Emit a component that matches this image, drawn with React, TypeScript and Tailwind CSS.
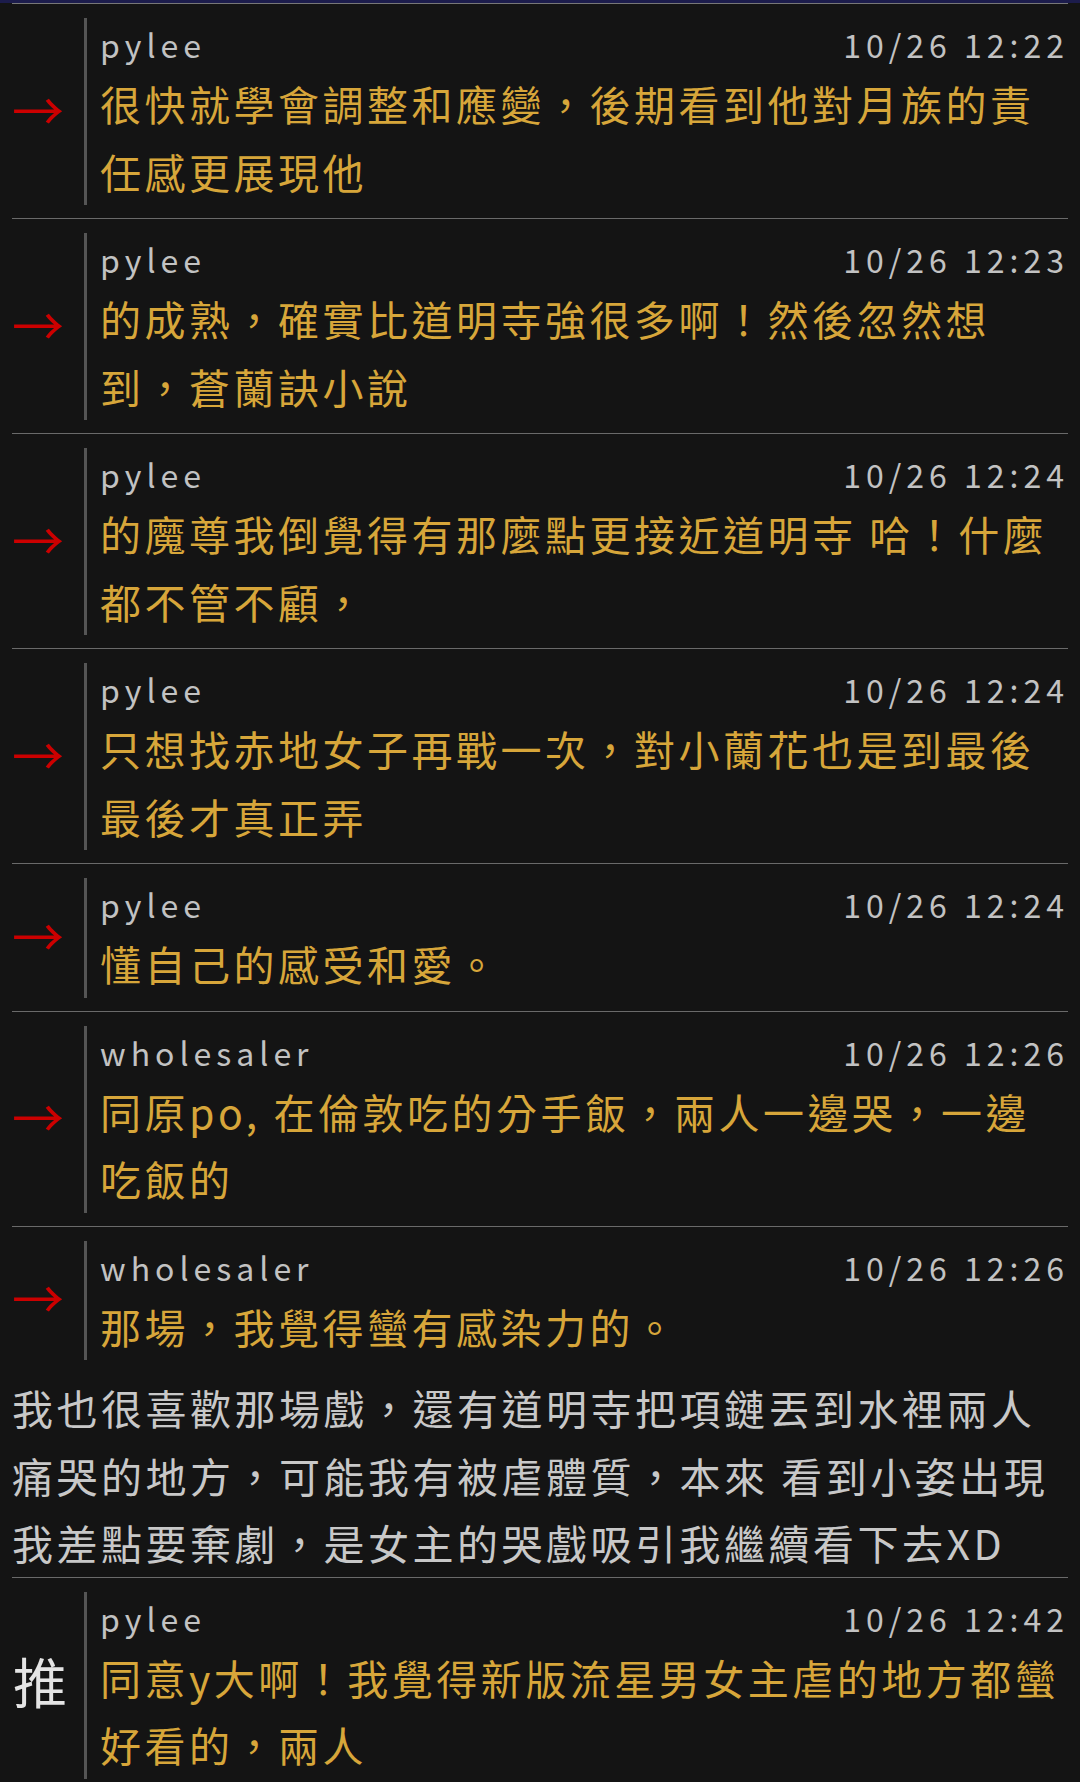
import React from "react";

interface Comment {
  tag: "arrow" | "push";
  user: string;
  time: string;
  lines: string[];
  last?: boolean;
}

const COMMENTS: Comment[] = [
  { tag: "arrow", user: "pylee", time: "10/26 12:22", lines: ["很快就學會調整和應變，後期看到他對月族的責", "任感更展現他"] },
  { tag: "arrow", user: "pylee", time: "10/26 12:23", lines: ["的成熟，確實比道明寺強很多啊！然後忽然想", "到，蒼蘭訣小說"] },
  { tag: "arrow", user: "pylee", time: "10/26 12:24", lines: ["的魔尊我倒覺得有那麼點更接近道明寺 哈！什麼", "都不管不顧，"] },
  { tag: "arrow", user: "pylee", time: "10/26 12:24", lines: ["只想找赤地女子再戰一次，對小蘭花也是到最後", "最後才真正弄"] },
  { tag: "arrow", user: "pylee", time: "10/26 12:24", lines: ["懂自己的感受和愛。"] },
  { tag: "arrow", user: "wholesaler", time: "10/26 12:26", lines: ["同原po, 在倫敦吃的分手飯，兩人一邊哭，一邊", "吃飯的"] },
  { tag: "arrow", user: "wholesaler", time: "10/26 12:26", lines: ["那場，我覺得蠻有感染力的。"], last: true },
];

const BODY = [
  "我也很喜歡那場戲，還有道明寺把項鏈丟到水裡兩人",
  "痛哭的地方，可能我有被虐體質，本來 看到小姿出現",
  "我差點要棄劇，是女主的哭戲吸引我繼續看下去XD",
];

const PUSH: Comment = {
  tag: "push",
  user: "pylee",
  time: "10/26 12:42",
  lines: ["同意y大啊！我覺得新版流星男女主虐的地方都蠻", "好看的，兩人"],
};

const CommentRow: React.FC<{ c: Comment }> = ({ c }) => (
  <div
    className={`flex pt-[14px] ${c.last ? "pb-[14px]" : "pb-[13px] border-b border-[#6a6a6a]"}`}
  >
    <div className="w-[72px] shrink-0 flex items-center">
      {c.tag === "arrow" ? (
        <span className="relative -top-[3px] text-[52px] leading-none text-[#cc0000]">→</span>
      ) : (
        <span className="relative -top-[4px] pl-[1px] text-[54px] leading-none text-[#e4e4e4]">推</span>
      )}
    </div>
    <div className="flex-1 border-l-[3px] border-[#555555] pl-[13px]">
      <div className="flex justify-between h-[52px] text-[32px] leading-[52px] tracking-[5px] text-[#c2c2c2]">
        <span>{c.user}</span>
        <span className="-mr-[1px]">{c.time}</span>
      </div>
      <div className="text-[41px] leading-[67.5px] tracking-[3.5px] text-[#d7a63a]">
        {c.lines.map((l, i) => (
          <div key={i} className="whitespace-nowrap">
            {l}
          </div>
        ))}
      </div>
    </div>
  </div>
);

export default function App() {
  return (
    <div className="min-h-screen w-full bg-[#141414] font-['Noto_Sans_CJK_TC','Noto_Sans',sans-serif]">
      <div className="h-[3px] bg-[#1c1c4c]" />
      <div className="mx-3 border-t border-[#777777]">
        {COMMENTS.map((c, i) => (
          <CommentRow key={i} c={c} />
        ))}
        <div className="text-[41px] leading-[67.5px] tracking-[3.5px] text-[#c8c8c8] border-b border-[#6a6a6a]">
          {BODY.map((l, i) => (
            <div key={i} className="whitespace-nowrap">
              {l}
            </div>
          ))}
        </div>
        <CommentRow c={{ ...PUSH, last: true }} />
      </div>
    </div>
  );
}
